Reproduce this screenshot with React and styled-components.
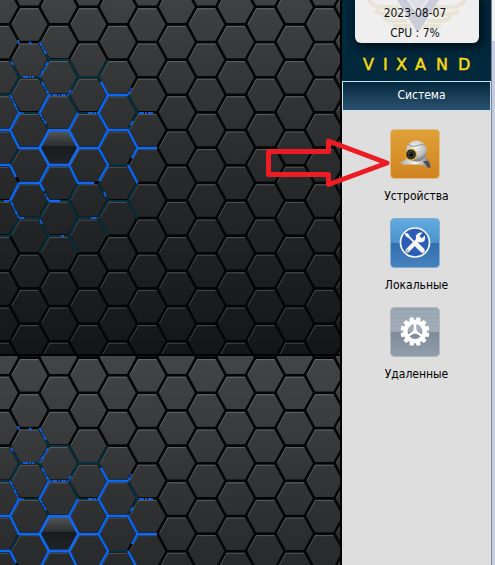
import React from "react";
import styled, { createGlobalStyle } from "styled-components";

const TILE_WIDTH = 1770;
const TILE_HEIGHT = 386;
const COLUMN_STEP = 29.5;
const ROW_STEP = 35.2;

// x of the hexagon column centre, y of the top edges of that column
const columnX = (col) => 29.3 + COLUMN_STEP * col;
const columnY = (col) => (col % 2 === 0 ? 1.6 : 19.2);

const buildHexes = () => {
  let edges = "";
  let lights = "";
  for (let col = -2; col < 60; col++) {
    for (let row = -1; row < 11; row++) {
      const x = columnX(col);
      const y = columnY(col) + ROW_STEP * row;
      edges += `M${x + 10} ${y}H${x - 10}L${x - 19.6} ${y + 17.6}L${x - 10} ${y + 35.2}M${x + 10} ${y}L${x + 19.6} ${y + 17.6}`;
      lights += `M${x - 17.4} ${y + 17}L${x - 9} ${y + 2}H${x + 9}`;
    }
  }
  return { edges, lights };
};

const HEXES = buildHexes();

const TEAL =
  "M0 125H10L19 107M49 90H69L78 107H98.500L108 90M78 107L69 125L78 143H98.500M128 125L137.500 143L128 160M19 143H39.500L49 160M19 178L10 195M39.500 107L49 125M108 195H128M98.500 213L108 231H128L137.500 213M128 231L137.500 248M108 231L98.500 248H78L69 231L78 213M69 231H49M78 248L69 266H49L39.500 248H19L10 231M19 248L10 266H0M39.500 248L49 231M69 266L78 283M49 266L39.500 283M98.500 248L108 266M10 90L19 107M39.500 72L49 90L39.500 107H19M10 125L19 143M39.500 213L49 231M98.500 107L108 125M0 231H10";

const BLUE =
  "M49 125L39.500 143M19 143L10 160M0 160H10L19 178H39.500M69 160L78 143M101 112L108 125L98.500 143L108 160H128L137.500 178L132 188M128 195L137.500 213M108 125H128M108 160L98.500 178L108 195L99 211M94 213H78L69 195M78 178H98.500M49 195L39.500 213H19M10 195L16 207M10 195H0M137.500 178H157M19 213L10 231M39.500 213L44 221M49 231H60";

const SPARKS =
  "M18 70L19 74M29 72L32 74M39.500 72L46 84M48 92L39.500 107M23 107H34M42 112L49 125H68L71 120M10 125L19 143L24 143M39.500 143L46 154M88 143H98.500M128 125L132 117M139 143H154M133 151L130 156M11 232L19 248H24M49 231L45 224M91 248H98M40 250L42 254M61 266H64M104 222L106 227M11 92L13 95M4 231H10";

const Wallpaper = () => (
  <WallpaperArt aria-hidden="true">
    <defs>
      <linearGradient id="steel" x1="0" y1="0" x2="0" y2="1">
        <stop offset="0" stopColor="#434446" />
        <stop offset="0.5" stopColor="#2a2b2d" />
        <stop offset="1" stopColor="#141516" />
      </linearGradient>
      <linearGradient id="gloss" x1="0" y1="0" x2="0" y2="1">
        <stop offset="0" stopColor="#54575a" />
        <stop offset="0.44" stopColor="#2c2f32" />
        <stop offset="0.46" stopColor="#171b1e" />
        <stop offset="1" stopColor="#20252a" />
      </linearGradient>
      <pattern
        id="hexes"
        y="-30"
        width={TILE_WIDTH}
        height={TILE_HEIGHT}
        patternUnits="userSpaceOnUse"
      >
        <rect width={TILE_WIDTH} height={TILE_HEIGHT} fill="url(#steel)" />
        <g fill="none">
          <path d={HEXES.lights} stroke="#fff" strokeOpacity="0.2" />
          <path d={HEXES.edges} stroke="#040505" strokeWidth="2.6" />
          <path d={TEAL} stroke="#06303f" strokeWidth="2.2" />
          <path d={BLUE} stroke="#0b3f86" strokeWidth="3" />
          <path d={BLUE} stroke="#0d68f5" strokeWidth="1.8" />
          <path d={SPARKS} stroke="#0d5fe0" strokeWidth="2" strokeDasharray="5 1 2 1" />
        </g>
        <path
          d="M49 160.400H69L78.500 178L69 195.200H49L39.500 178Z"
          fill="url(#gloss)"
          stroke="#1269ee"
          strokeWidth="2.8"
        />
        <rect y="384" width={TILE_WIDTH} height="2" fill="#030303" />
      </pattern>
    </defs>
    <rect width="100%" height="100%" fill="url(#hexes)" />
  </WallpaperArt>
);

const Emblem = () => (
  <EmblemArt viewBox="0 0 124 43" aria-hidden="true">
    <g fill="none" stroke="#c9b96a" strokeWidth="4">
      <path d="M14 0Q18 7 28 7H44M20 10Q24 14 32 14H48M28 17Q32 21 38 21H52M38 26H56" />
      <path d="M110 0Q106 7 96 7H80M104 10Q100 14 92 14H76M96 17Q92 21 86 21H72M86 26H68" />
    </g>
    <path d="M42 0L63 33L84 0H74L63 15L52 0Z" fill="#3b4c86" />
    <path d="M54 0L63 12L72 0Z" fill="#9aa3c0" />
  </EmblemArt>
);

const Brand = () => (
  <BrandArt viewBox="0 0 124 20" role="img" aria-label="VIXAND">
    <text x="8 28 41 60 81 103" y="16">
      VIXAND
    </text>
  </BrandArt>
);

const WebcamIcon = () => (
  <svg viewBox="0 0 50 50" aria-hidden="true">
    <defs>
      <linearGradient id="amber" x1="0" y1="0" x2="0" y2="1">
        <stop offset="0" stopColor="#e0a238" />
        <stop offset="1" stopColor="#d08220" />
      </linearGradient>
      <radialGradient id="ball" cx="0.45" cy="0.3" r="0.75">
        <stop offset="0" stopColor="#f4f4f2" />
        <stop offset="0.6" stopColor="#c0c1c2" />
        <stop offset="1" stopColor="#66686b" />
      </radialGradient>
      <linearGradient id="foot" x1="0" y1="0" x2="1" y2="0">
        <stop offset="0" stopColor="#a9abad" />
        <stop offset="0.5" stopColor="#f4f4f4" />
        <stop offset="0.8" stopColor="#a4a6a8" />
        <stop offset="1" stopColor="#55585c" />
      </linearGradient>
    </defs>
    <rect x="0.5" y="0.5" width="49" height="49" rx="4" fill="url(#amber)" stroke="#e0bd85" />
    <path
      d="M18 29L10.500 33.500Q10.500 36 14 35.500L27 35.500Q34 35.500 37 38.500L40.500 38.500Q40.500 34 36 28Z"
      fill="url(#foot)"
    />
    <path d="M33 32Q35 35.500 38 38.500H40.500Q40 34.500 38 32Z" fill="#4c5054" />
    <circle cx="26.500" cy="22" r="10.500" fill="url(#ball)" />
    <path d="M18 15.500Q22 19 28 16.500Q33 14 36 18" fill="none" stroke="#8d8f92" />
    <path d="M31 12.500Q38 16 37 24" fill="none" stroke="#e3ab35" strokeWidth="0.8" />
    <circle cx="21" cy="25.500" r="5.500" fill="#2a2a2a" stroke="#eeb52c" strokeWidth="1.2" />
    <circle cx="21" cy="25.500" r="2.800" fill="#060708" stroke="#555" strokeWidth="0.8" />
    <circle cx="20" cy="24.500" r="0.6" fill="#999" />
  </svg>
);

const ToolsIcon = () => (
  <svg viewBox="0 0 50 50" aria-hidden="true">
    <defs>
      <linearGradient id="sky" x1="0" y1="0" x2="0" y2="1">
        <stop offset="0" stopColor="#62ace0" />
        <stop offset="0.5" stopColor="#4b92cb" />
        <stop offset="0.51" stopColor="#346eae" />
        <stop offset="1" stopColor="#4583bd" />
      </linearGradient>
    </defs>
    <rect x="0.5" y="0.5" width="49" height="49" rx="4" fill="url(#sky)" stroke="#82acd0" />
    <circle cx="25" cy="24.500" r="14.500" fill="#2c5db6" stroke="#f5f8fc" strokeWidth="1.7" />
    <path d="M17 17L28 28" stroke="#eee" strokeWidth="1.8" />
    <path d="M15 15L18 15.500L20 18.500L18.500 20L15.500 18Z" fill="#fff" />
    <path d="M27 27L32.500 32.500" stroke="#f4f4f2" strokeWidth="4.600" strokeLinecap="round" />
    <path d="M17.500 32.500L29 21" stroke="#f4f4f2" strokeWidth="4" strokeLinecap="round" />
    <path
      d="M26 22Q24.500 16 30 14.500L32.500 14.500L29.500 18L31.500 20.500L35 17.500Q36.500 24 30 24.500Z"
      fill="#fff"
    />
    <circle cx="17.500" cy="32.500" r="0.9" fill="#8493b3" />
  </svg>
);

const TEETH = [0, 30, 60, 90, 120, 150, 180, 210, 240, 270, 300, 330];

const GearIcon = () => (
  <svg viewBox="0 0 50 50" aria-hidden="true">
    <defs>
      <linearGradient id="slate" x1="0" y1="0" x2="0" y2="1">
        <stop offset="0" stopColor="#98a3b1" />
        <stop offset="0.5" stopColor="#a0aab7" />
        <stop offset="0.51" stopColor="#7f8b9a" />
        <stop offset="1" stopColor="#929dab" />
      </linearGradient>
    </defs>
    <rect x="0.5" y="0.5" width="49" height="49" rx="4" fill="url(#slate)" stroke="#b0b7bf" />
    <path d="M1 5H49M1 9H49M1 13H49M1 17H49M1 21H49" stroke="#fff" strokeOpacity="0.12" />
    <g fill="#fff">
      {TEETH.map((angle) => (
        <rect
          key={angle}
          x="22.800"
          y="10"
          width="4.400"
          height="6"
          rx="1"
          transform={`rotate(${angle + 15} 25 24.500)`}
        />
      ))}
    </g>
    <circle cx="25" cy="24.500" r="9.600" fill="none" stroke="#fff" strokeWidth="4.400" />
    <path d="M25 24.500V16M25 24.500L17.500 29M25 24.500L32.500 29" stroke="#fff" strokeWidth="2.600" />
    <circle cx="25" cy="24.500" r="2.200" fill="#fff" />
  </svg>
);

const MENU = [
  { label: "Устройства", Icon: WebcamIcon },
  { label: "Локальные", Icon: ToolsIcon },
  { label: "Удаленные", Icon: GearIcon },
];

const App = () => {
  return (
    <>
      <GlobalStyle />
      <Page>
        <Desktop>
          <Wallpaper />
        </Desktop>
        <Sidebar>
          <SidebarHead>
            <StatusCard>
              <Emblem />
              <StatusLine>2023-08-07</StatusLine>
              <StatusLine>CPU : 7%</StatusLine>
            </StatusCard>
            <Brand />
          </SidebarHead>
          <SectionButton type="button">Система</SectionButton>
          <Menu>
            {MENU.map(({ label, Icon }) => (
              <MenuButton key={label} type="button">
                <Icon />
                {label}
              </MenuButton>
            ))}
          </Menu>
          <Pointer viewBox="0 0 126 54" aria-hidden="true">
            <path d="M2.500 16.500H62.500V6L121 28L62.500 49.500V39.500H2.500Z" />
          </Pointer>
        </Sidebar>
        <WindowEdge />
      </Page>
    </>
  );
};

const GlobalStyle = createGlobalStyle`
  body {
    margin: 0;
    font-family: "DejaVu Sans Condensed", "Noto Sans", sans-serif;
    font-size: 12px;
  }
`;

const Page = styled.main`
  display: grid;
  grid-template-columns: 1fr 149px 4px;
  min-height: 100vh;
`;

const Desktop = styled.div`
  display: flex;
  min-width: 0;
  border-right: 2px solid #000;
`;

const WallpaperArt = styled.svg`
  flex: 1;
  width: 100%;
  height: 100%;
`;

const Sidebar = styled.aside`
  position: relative;
  display: flex;
  flex-direction: column;
  background: #dedede;
`;

const SidebarHead = styled.div`
  display: flex;
  flex-direction: column;
  gap: 11px;
  padding: 0 12px 7px 13px;
  background: #02283c;
`;

const StatusCard = styled.div`
  position: relative;
  padding: 3px 4px 0 0;
  border-radius: 0 0 6px 6px;
  background: #efefef;
  box-shadow: 2px 2px 8px 2px #001018;
  color: #111;
  text-align: center;
`;

const StatusLine = styled.p`
  position: relative;
  margin: 0;
  line-height: 20px;
`;

const EmblemArt = styled.svg`
  position: absolute;
  top: 0;
  left: 0;
  width: 100%;
  opacity: 0.2;
`;

const BrandArt = styled.svg`
  height: 20px;

  text {
    fill: #f7d912;
    stroke: #f7d912;
    stroke-width: 0.5px;
    font-family: "DejaVu Sans", sans-serif;
    font-size: 16px;
  }
`;

const SectionButton = styled.button`
  height: 30px;
  padding: 0 0 2px 10px;
  border: 1px solid #c3e6f7;
  background: linear-gradient(#03283d, #2b5270);
  color: #fff;
  font: inherit;
  cursor: pointer;
`;

const Menu = styled.nav`
  display: flex;
  flex-direction: column;
  align-items: center;
  gap: 13px;
  padding-top: 18px;
`;

const MenuButton = styled.button`
  display: flex;
  flex-direction: column;
  align-items: center;
  gap: 9px;
  padding: 0;
  border: none;
  background: transparent;
  color: #000;
  font: inherit;
  line-height: 17px;
  cursor: pointer;

  svg {
    width: 50px;
    height: 50px;
    margin-right: 3px;
  }
`;

const Pointer = styled.svg`
  position: absolute;
  top: 135px;
  right: 99px;
  width: 126px;
  height: 54px;
  overflow: visible;
  pointer-events: none;

  path {
    fill: none;
    stroke: #ed1c24;
    stroke-width: 5px;
    stroke-linejoin: round;
  }
`;

const WindowEdge = styled.div`
  border-left: 1px solid #85898f;
  background: linear-gradient(#f1f1f2 41px, #c6cce0 41px);
`;

export default App;
